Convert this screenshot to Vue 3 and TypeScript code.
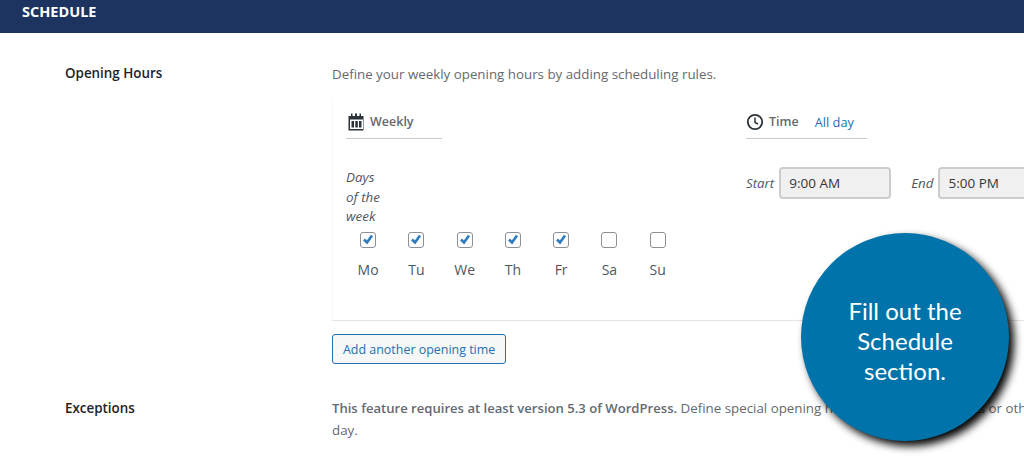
<template>
  <div class="page">
    <header class="bar">SCHEDULE</header>

    <section class="row hours">
      <div class="label">Opening Hours</div>
      <div class="body">
        <p class="desc">Define your weekly opening hours by adding scheduling rules.</p>
        <div class="rule-box">
          <div class="date-col">
            <div class="col-head weekly">
              <svg class="ico" width="17" height="18" viewBox="0 0 17 18">
                <path fill="#2c3338" d="M0.500 3h2.500V0.500h1.500V3h2.500V0.500h2V3h2.500V0.500h1.500V3h2.500v14.500H0.500z" />
                <path fill="#fff" d="M2 6.500h13v9.500H2z" />
                <path fill="#2c3338" d="M3.500 8h2.500v6.500H3.500zM7.300 8h2.500v6.500H7.300zM11 8h2.500v6.500H11z" />
              </svg>
              <span>Weekly</span>
            </div>
            <div class="days-label">Days<br />of the<br />week</div>
            <div class="days">
              <div v-for="d in days" :key="d.name" class="day">
                <span class="check" :class="{ on: d.on }">
                  <svg v-if="d.on" width="14" height="14" viewBox="0 0 14 14">
                    <path fill="none" stroke="#2e7cc0" stroke-width="2.600" d="M3 6.500l3 3 5-7" />
                  </svg>
                </span>
                <span class="day-name">{{ d.name }}</span>
              </div>
            </div>
          </div>
          <div class="time-col">
            <div class="col-head time">
              <svg class="ico" width="18" height="18" viewBox="0 0 18 18">
                <circle cx="9" cy="9" r="7.200" fill="none" stroke="#2c3338" stroke-width="1.800" />
                <path fill="none" stroke="#2c3338" stroke-width="1.500" d="M9 4.500V9.500L12 11" />
              </svg>
              <span>Time</span>
              <a class="all-day">All day</a>
            </div>
            <div class="times">
              <em>Start</em>
              <div class="field start">9:00 AM</div>
              <em class="end-label">End</em>
              <div class="field end">5:00 PM</div>
            </div>
          </div>
        </div>
        <button class="add" type="button">Add another opening time</button>
      </div>
    </section>

    <section class="row exceptions">
      <div class="label">Exceptions</div>
      <div class="body">
        <p class="desc ex"><strong>This feature requires at least version 5.3 of WordPress.</strong> Define special opening hours for holidays, events or other changes to your schedule for a particular day.</p>
      </div>
    </section>

    <div class="bubble">Fill out the<br />Schedule<br />section.</div>
  </div>
</template>

<script setup lang="ts">
const days = [
  { name: 'Mo', on: true },
  { name: 'Tu', on: true },
  { name: 'We', on: true },
  { name: 'Th', on: true },
  { name: 'Fr', on: true },
  { name: 'Sa', on: false },
  { name: 'Su', on: false },
]
</script>

<style>
html,
body {
  margin: 0;
  background: #fff;
}
</style>

<style scoped>
.page {
  position: relative;
  width: 1024px;
  height: 456px;
  overflow: hidden;
  background: #fff;
  font-family: "Open Sans", "Noto Sans", sans-serif;
  font-size: 13px;
  color: #646970;
}
.bar {
  height: 33px;
  box-sizing: border-box;
  padding: 2px 0 0 22px;
  background: #1d3461;
  color: #fff;
  font-size: 14.500px;
  font-weight: 700;
  line-height: 20px;
}
.row {
  display: flex;
  padding-left: 65px;
}
.label {
  width: 267px;
  flex: none;
  color: #1d2327;
  font-size: 13.400px;
  font-weight: 600;
  line-height: 18px;
}
.hours {
  padding-top: 31px;
}
.body {
  width: 692px;
  flex: none;
}
.desc {
  margin: 0;
  font-size: 13.330px;
  line-height: 20px;
  white-space: nowrap;
}
.rule-box {
  display: flex;
  height: 223px;
  box-sizing: border-box;
  margin-top: 14px;
  padding-left: 13px;
  border-left: 1px solid #f8f8f8;
  border-bottom: 1px solid #e4e4e4;
}
.date-col {
  width: 400px;
  flex: none;
}
.col-head {
  display: flex;
  align-items: center;
  height: 41px;
  box-sizing: border-box;
  padding-top: 7px;
  border-bottom: 1px solid #c8c8c8;
  font-weight: 600;
  font-size: 12.500px;
}
.weekly {
  width: 96px;
  padding-left: 2px;
}
.weekly .ico {
  margin-right: 5px;
}
.time {
  width: 121px;
}
.time .ico {
  margin: 0 5px 0 0;
}
.all-day {
  margin-left: 16px;
  color: #2271b1;
  font-weight: 400;
  font-size: 12.800px;
}
.days-label {
  margin-top: 29px;
  color: #50575e;
  font-style: italic;
  font-size: 13.400px;
  line-height: 19.500px;
}
.days {
  display: grid;
  grid-template-columns: repeat(7, 48.250px);
  margin: 5px 0 0 -2px;
}
.day {
  display: flex;
  flex-direction: column;
  align-items: center;
  gap: 13px;
}
.check {
  display: flex;
  align-items: center;
  justify-content: center;
  width: 16px;
  height: 16px;
  box-sizing: border-box;
  border: 1px solid #8c8f94;
  border-radius: 3px;
  background: #fff;
}
.day-name {
  color: #50575e;
  font-size: 14px;
  line-height: 18px;
}
.times {
  display: flex;
  align-items: center;
  margin-top: 28px;
  white-space: nowrap;
  color: #50575e;
}
.times em {
  font-size: 13.300px;
  margin-right: 5px;
}
.times em.end-label {
  margin: 0 5px 0 20px;
}
.field {
  width: 112px;
  height: 32px;
  box-sizing: border-box;
  flex: none;
  padding-left: 8px;
  border: 2px solid #ccc;
  border-radius: 4px;
  background: #f0f0f0;
  color: #32373c;
  font-size: 13.500px;
  line-height: 28px;
}
.add {
  display: block;
  height: 30px;
  box-sizing: border-box;
  margin-top: 13px;
  padding: 0 10px;
  border: 1px solid #2271b1;
  border-radius: 3px;
  background: #f6f7f7;
  color: #2271b1;
  font-family: inherit;
  font-size: 12.450px;
  line-height: 27px;
  white-space: nowrap;
}
.exceptions {
  padding-top: 35px;
}
.ex {
  width: 985px;
  margin-top: -2px;
  white-space: normal;
  line-height: 22px;
}
.ex strong {
  font-size: 13.100px;
  font-weight: 600;
}
.bubble {
  position: absolute;
  left: 801px;
  top: 233px;
  display: flex;
  align-items: center;
  justify-content: center;
  width: 208px;
  height: 208px;
  box-sizing: border-box;
  padding-top: 8px;
  border-radius: 50%;
  background: #0073aa;
  box-shadow: 5px 5px 8px #000;
  color: #fff;
  font-family: Lato, "Open Sans", sans-serif;
  font-size: 24px;
  line-height: 30px;
  text-align: center;
}
</style>
